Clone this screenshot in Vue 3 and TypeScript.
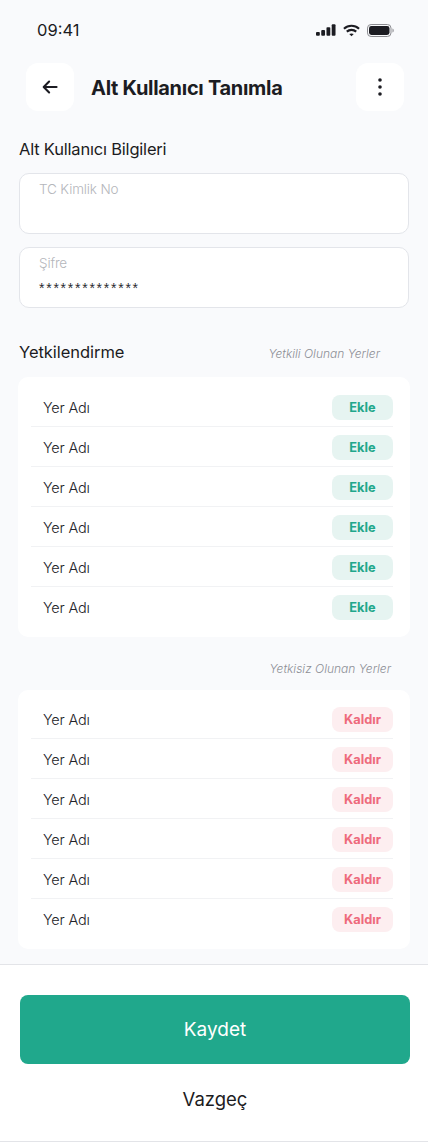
<script setup lang="ts">
const rows: number[] = [1, 2, 3, 4, 5, 6]
</script>

<template>
  <div class="screen">
    <div class="status">
      <span class="time">09:41</span>
      <div class="status-icons">
        <svg width="20" height="12" viewBox="0 0 21 12" fill="#1c1c22">
          <rect x="0" y="8" width="4" height="4" rx="1" />
          <rect x="5.5" y="6" width="4" height="6" rx="1" />
          <rect x="11" y="3" width="4" height="9" rx="1" />
          <rect x="16.5" y="0" width="4" height="12" rx="1" />
        </svg>
        <svg width="17" height="13" viewBox="0 0 18 13" fill="none" stroke="#1c1c22" stroke-width="2.2">
          <path d="M1 4.6C5.5.4 12.5.4 17 4.6" />
          <path d="M4 7.7c2.8-2.5 7.2-2.5 10 0" />
          <path d="M9 12.6 6.6 10.3c1.4-1 3.4-1 4.8 0z" fill="#1c1c22" stroke="none" />
        </svg>
        <svg width="27" height="13" viewBox="0 0 27 13" fill="none">
          <rect x=".5" y=".5" width="23.5" height="12" rx="3.6" stroke="#8b8b90" />
          <rect x="2" y="2" width="20.5" height="9" rx="2.4" fill="#1c1c22" />
          <path d="M25.5 4.5c.8.3 1.2 1.1 1.2 2s-.4 1.7-1.2 2z" fill="#8b8b90" />
        </svg>
      </div>
    </div>

    <header class="topbar">
      <button class="icon-btn">
        <svg width="16" height="14" viewBox="0 0 18 16" fill="none" stroke="#1c1c22" stroke-width="2.4" stroke-linecap="round" stroke-linejoin="round">
          <path d="M16.5 8H2M8 1.8 1.8 8 8 14.2" />
        </svg>
      </button>
      <h1 class="title">Alt Kullanıcı Tanımla</h1>
      <button class="icon-btn menu-btn">
        <svg width="4" height="18" viewBox="0 0 4 18" fill="#1c1c22">
          <circle cx="2" cy="2" r="1.8" />
          <circle cx="2" cy="9" r="1.8" />
          <circle cx="2" cy="16" r="1.8" />
        </svg>
      </button>
    </header>

    <main class="content">
      <h2 class="section-title info-title">Alt Kullanıcı Bilgileri</h2>
      <div class="field">
        <label>TC Kimlik No</label>
      </div>
      <div class="field field-second">
        <label>Şifre</label>
        <div class="value">**************</div>
      </div>

      <div class="perm-head">
        <h2 class="section-title perm-title">Yetkilendirme</h2>
        <span class="hint perm-hint">Yetkili Olunan Yerler</span>
      </div>
      <ul class="card">
        <li v-for="r in rows" :key="'a' + r" class="row">
          <span class="place">Yer Adı</span>
          <span class="pill pill-add">Ekle</span>
        </li>
      </ul>

      <div class="hint hint-second">Yetkisiz Olunan Yerler</div>
      <ul class="card card-second">
        <li v-for="r in rows" :key="'b' + r" class="row">
          <span class="place">Yer Adı</span>
          <span class="pill pill-remove">Kaldır</span>
        </li>
      </ul>
    </main>

    <footer class="footer">
      <button class="save">Kaydet</button>
      <button class="cancel">Vazgeç</button>
    </footer>
  </div>
</template>

<style scoped>
.screen {
  width: 428px;
  height: 1142px;
  background: #f9fafc;
  font-family: Inter, "Liberation Sans", sans-serif;
  color: #1c1c22;
  display: flex;
  flex-direction: column;
  overflow: hidden;
}
.status {
  height: 63px;
  box-sizing: border-box;
  padding: 19px 34px 0 37px;
  display: flex;
  justify-content: space-between;
  align-items: flex-start;
}
.time {
  font-size: 16.5px;
  line-height: 22px;
  font-weight: 400;
}
.status-icons {
  display: flex;
  align-items: center;
  gap: 7px;
  height: 22px;
}
.topbar {
  height: 48px;
  padding: 0 24px 0 26px;
  display: flex;
  align-items: center;
}
.icon-btn {
  width: 48px;
  height: 48px;
  border: 0;
  padding: 0;
  background: #fff;
  border-radius: 12px;
  display: flex;
  align-items: center;
  justify-content: center;
}
.title {
  margin: 2px 0 0 17px;
  font-size: 20px;
  font-weight: 700;
  letter-spacing: -0.3px;
  line-height: 26px;
  flex: 1;
}
.content {
  flex: 1;
  padding: 0 19px;
}
.section-title {
  margin: 0;
  font-size: 16.5px;
  font-weight: 400;
  line-height: 22px;
  letter-spacing: -0.2px;
}
.info-title {
  margin-top: 27px;
}
.perm-title {
  margin-top: -2px;
  letter-spacing: -0.05px;
}
.field {
  margin-top: 13px;
  width: 390px;
  height: 61px;
  box-sizing: border-box;
  background: #fff;
  border: 1px solid #e3e5ea;
  border-radius: 10px;
  padding: 6px 19px 0;
}
.field-second {
  margin-top: 13px;
}
.field label {
  display: block;
  font-size: 13.5px;
  line-height: 18px;
  font-weight: 300;
  letter-spacing: -0.15px;
  color: #b4b6bb;
}
.value {
  margin-top: 7px;
  font-size: 14px;
  line-height: 18px;
  color: #2a2a30;
  letter-spacing: 1.75px;
  font-family: "Liberation Sans", sans-serif;
}
.perm-head {
  margin-top: 34px;
  display: flex;
  align-items: center;
  justify-content: space-between;
  height: 22px;
  padding-right: 29px;
}
.hint {
  font-size: 12px;
  line-height: 16px;
  font-style: italic;
  font-weight: 300;
  color: #8d8f96;
}
.perm-hint {
  margin-top: 2px;
}
.hint-second {
  margin-top: 24px;
  height: 16px;
  padding-right: 18px;
  text-align: right;
}
.card {
  list-style: none;
  margin: 13px 0 0 -1px;
  padding: 10px 17px 10px 13px;
  width: 392px;
  box-sizing: border-box;
  background: #fff;
  border-radius: 10px;
}
.card-second {
  padding-top: 9px;
}
.row {
  height: 40px;
  box-sizing: border-box;
  padding-left: 12px;
  display: flex;
  align-items: center;
  justify-content: space-between;
  box-shadow: inset 0 -1px 0 #f1f2f4;
}
.row:last-child {
  box-shadow: none;
}
.place {
  font-size: 14.5px;
  font-weight: 300;
  letter-spacing: -0.2px;
  color: #232429;
}
.pill {
  width: 61px;
  height: 25px;
  margin-top: 1px;
  border-radius: 8px;
  display: flex;
  align-items: center;
  justify-content: center;
  font-size: 12.8px;
  font-weight: 700;
}
.pill-add {
  background: #e6f4f1;
  color: #22a78b;
}
.pill-remove {
  background: #fdeef0;
  color: #ee6a7c;
}
.footer {
  height: 178px;
  box-sizing: border-box;
  background: #fff;
  border-top: 1px solid #e3e4e8;
  border-bottom: 1px solid #e3e4e8;
  padding: 30px 18px 0 20px;
  display: flex;
  flex-direction: column;
}
.save {
  height: 69px;
  border: 0;
  border-radius: 8px;
  background: #20a88c;
  color: #fff;
  font-family: inherit;
  font-size: 19px;
  font-weight: 400;
}
.cancel {
  margin-top: 18px;
  height: 34px;
  border: 0;
  background: transparent;
  color: #1c1c22;
  font-family: inherit;
  font-size: 18.5px;
  font-weight: 400;
}
</style>
